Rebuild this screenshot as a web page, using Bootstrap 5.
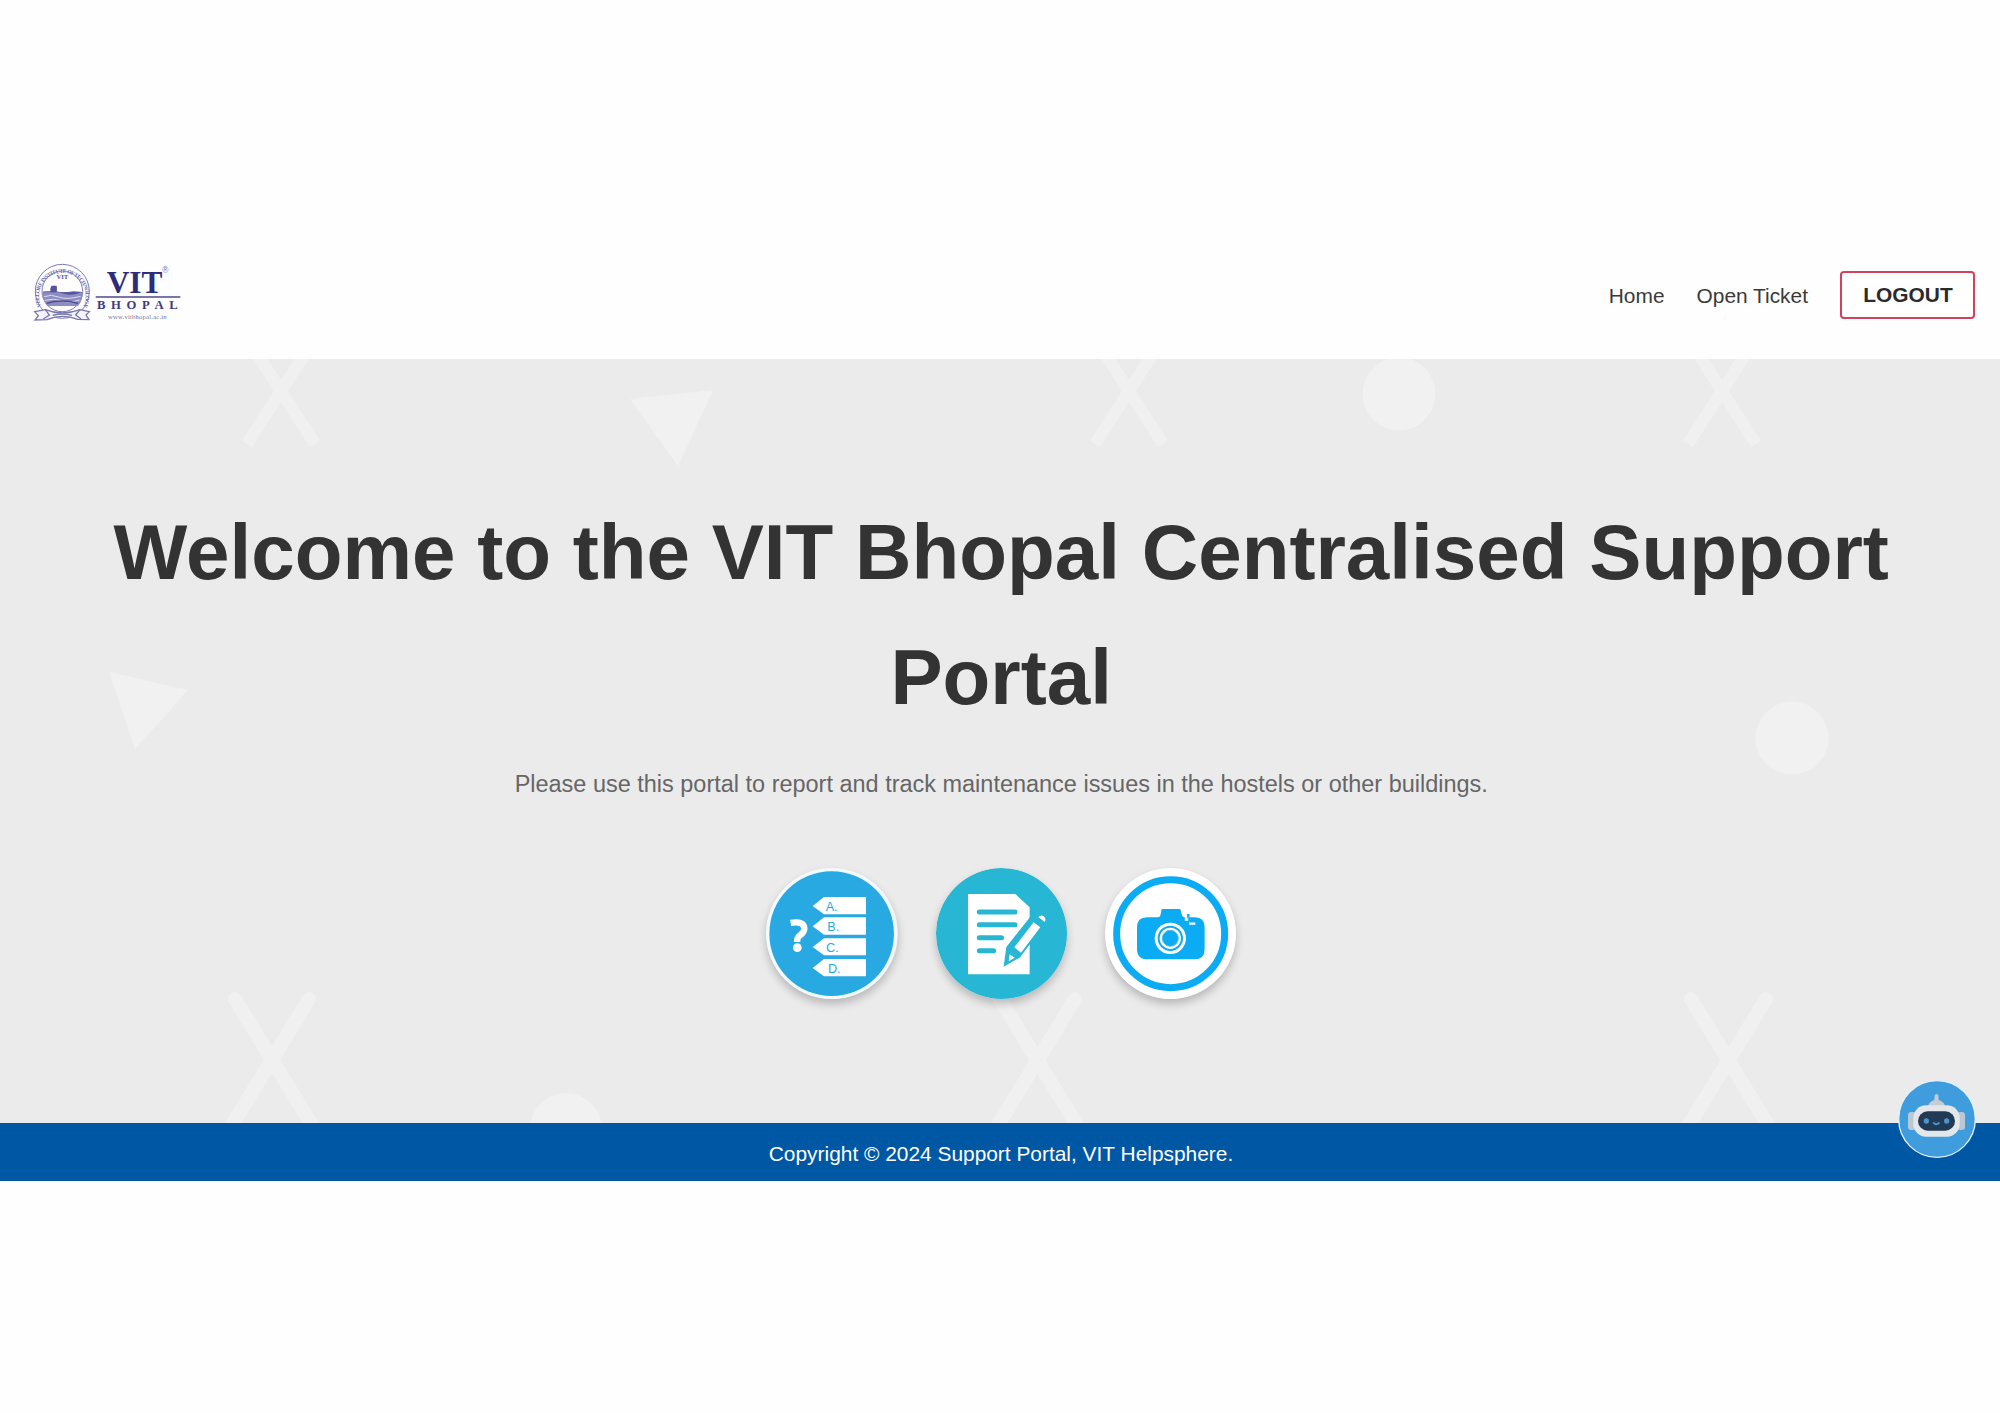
<!DOCTYPE html>
<html lang="en">
<head>
<meta charset="utf-8">
<meta name="viewport" content="width=device-width, initial-scale=1">
<title>VIT Bhopal Centralised Support Portal</title>
<link rel="stylesheet" href="https://cdn.jsdelivr.net/npm/bootstrap@5.3.0/dist/css/bootstrap.min.css">
<style>
body{font-family:"Liberation Sans",Arial,sans-serif;font-size:20.9px;line-height:1.6;color:#333;background:#fefefe;padding-top:222px;overflow-x:hidden}
.site-nav{height:137px;padding:0 25px 0 20px}
.site-nav .nav-link{color:#3a3a3a;padding:0;line-height:33px}
.nav-items{gap:32px;padding-top:9px}
.site-logo{width:180px;height:80px;display:block}
.btn-logout{border:2px solid #d5405c;border-radius:4px;color:#2b2b2b;font-weight:700;font-size:20.9px;line-height:32px;padding:6px 21px 6px 22px;width:135px;height:48px;background:#fff}
.hero{height:764px;background:#ebebeb;padding:130.5px 0 0 2.5px}
.hero-shapes{position:absolute;inset:0;width:100%;height:100%}
.hero h1{font-size:78.2px;line-height:125px;font-weight:700;color:#333;margin:0;width:1860px}
.hero-text{font-size:23.47px;line-height:37.6px;color:#666;margin:26px 0 65px}
.tool-list{gap:38px}
.tool-icon{width:131.3px;height:131.3px;border-radius:50%;box-shadow:0 5px 9px rgba(0,0,0,.22);overflow:hidden}
.tool-icon svg,.chat-bot svg{display:block;width:100%;height:100%}
.site-footer{height:58px;background:#0057a4;color:#fff;line-height:34px;padding:3px 0 0 2px}
.chat-bot{position:absolute;right:24px;bottom:23px;width:78px;height:78px}
</style>
</head>
<body>
<nav class="site-nav d-flex align-items-center justify-content-between">
  <a href="#" aria-label="VIT Bhopal">
    <svg class="site-logo" viewBox="0 0 540 240">
      <defs><path id="ring" d="M64 166A70 70 0 1 1 190 166"/></defs>
      <g fill="none" stroke="#7d7bb4">
        <circle cx="127" cy="121" r="81" stroke-width="3"/>
        <circle cx="127" cy="121" r="61" stroke-width="3"/>
      </g>
      <text font-family="Liberation Serif,serif" font-size="17" font-weight="700" fill="#6f6da8"><textPath href="#ring" textLength="285">VELLORE INSTITUTE OF TECHNOLOGY</textPath></text>
      <text x="127" y="83" text-anchor="middle" font-family="Liberation Serif,serif" font-weight="700" font-size="20" fill="#55539a">VIT</text>
      <path d="M67 121h26v-14h18v14l20 4 30-5 27 3q0 27-14 42H82Q67 148 67 121z" fill="#8c8dc0"/>
      <path d="M91 124v-12l4-8h15v20zM68 124q30-7 58 3t60-4" fill="#56549b"/>
      <path d="M72 137q22-8 44 1t66-2M74 148q28-7 50 1t55-2" fill="none" stroke="#deddf0" stroke-width="3"/>
      <path d="M80 157q47-14 94 0" fill="none" stroke="#4d4b94" stroke-width="4"/>
      <path d="M44 182l32-6q50 20 104 0l28 6-10 10 9 14-34-1q-46-18-92 1l-36 1 10-13z" fill="#f4f3fa" stroke="#7876ad" stroke-width="4"/>
      <path d="M76 176l12 16-18 12M180 176l-13 16 16 12M98 193q29-8 58 0" fill="none" stroke="#7876ad" stroke-width="4"/>
      <text x="260" y="126" textLength="167" lengthAdjust="spacingAndGlyphs" font-family="Liberation Serif,serif" font-weight="700" font-size="96" fill="#2c2c78">VIT</text>
      <text x="427" y="67" font-family="Liberation Sans,sans-serif" font-size="25" fill="#77759f">®</text>
      <path d="M227 138h254" stroke="#4a4a93" stroke-width="4"/>
      <text x="231" y="174" textLength="242" font-family="Liberation Serif,serif" font-weight="700" font-size="38" fill="#3b3a80">BHOPAL</text>
      <text x="264" y="204" textLength="176" font-family="Liberation Serif,serif" font-size="20" fill="#77759f">www.vitbhopal.ac.in</text>
    </svg>
  </a>
  <div class="nav-items d-flex align-items-center">
    <a class="nav-link" href="#">Home</a>
    <a class="nav-link" href="#">Open Ticket</a>
    <button class="btn-logout d-flex justify-content-center" type="button">LOGOUT</button>
  </div>
</nav>

<main class="hero position-relative overflow-hidden">
  <svg class="hero-shapes" viewBox="0 358 2000 764" fill="#f1f1f1" aria-hidden="true">
    <g fill="none" stroke="#f0f0f0" stroke-width="12">
      <path d="M256 351l59 92M306 351l-59 92"/>
      <path d="M1104 351l59 92M1154 351l-59 92"/>
      <path d="M1697 351l59 92M1747 351l-59 92"/>
    </g>
    <g fill="none" stroke="#f0f0f0" stroke-width="14" stroke-linecap="round">
      <path d="M235 998l80 131M309 998l-80 131"/>
      <path d="M1000 998l80 131M1075 998l-80 131"/>
      <path d="M1691 998l80 131M1766 998l-80 131"/>
    </g>
    <circle cx="1399" cy="393" r="36.5"/><circle cx="1792" cy="737" r="36.5"/><circle cx="566" cy="1128" r="36"/>
    <path d="M630 398l83-9-35 76zM109 671l79 18-53 59z"/>
  </svg>
  <div class="position-relative d-flex flex-column align-items-center text-center">
    <h1>Welcome to the VIT Bhopal Centralised Support Portal</h1>
    <p class="hero-text">Please use this portal to report and track maintenance issues in the hostels or other buildings.</p>
    <div class="tool-list d-flex">
      <a class="tool-icon" href="#" aria-label="Questions">
        <svg viewBox="48 50 394 394">
          <circle cx="245" cy="247" r="197" fill="#f3fafe"/><circle cx="245" cy="247" r="187" fill="#29a9e1"/>
          <g fill="#fff"><path d="M188 164l34-27h126v52H222zM188 225l34-27h126v52H222zM188 287l34-26h126v51H222zM188 350l34-27h126v52H222z"/>
          <circle cx="142" cy="289" r="13"/></g>
          <path d="M122 215q41-7 41 17 0 10-12 19-10 7-10 21" fill="none" stroke="#fff" stroke-width="19"/>
          <g font-family="Liberation Sans,sans-serif" font-size="38" fill="#29a9e1"><text x="227" y="178">A.</text><text x="232" y="240">B.</text><text x="228" y="301">C.</text><text x="234" y="364">D.</text></g>
        </svg>
      </a>
      <a class="tool-icon" href="#" aria-label="Report">
        <svg viewBox="558 50 394 394">
          <circle cx="755" cy="247" r="197" fill="#27b7d5"/>
          <path d="M654 128h142l43 40v201H654z" fill="#fff"/>
          <path d="M688 182h107M688 220h107M688 259h67M688 298h43" stroke="#27b7d5" stroke-width="15" stroke-linecap="round"/>
          <path d="M769 287l79-100 40 29-79 103-48 27z" fill="#27b7d5"/>
          <path d="M793 288l58-75 20 15-58 76z" fill="#fff"/>
          <path d="M865 197q11-10 19 1 5 7 0 14z" fill="#fff"/>
          <path d="M779 309l15 10-18 11z" fill="#fff"/>
        </svg>
      </a>
      <a class="tool-icon" href="#" aria-label="Photo">
        <svg viewBox="1064 50 394 394">
          <circle cx="1261" cy="247" r="197" fill="#fff"/><circle cx="1261" cy="247" r="162" fill="none" stroke="#0bacf3" stroke-width="21"/>
          <path d="M1190 198h32q8 0 9-10l3-15h56l4 15q2 10 10 10h30q29 0 29 30v65q0 31-30 31h-141q-32 0-32-31v-65q0-30 30-30z" fill="#0bacf3"/>
          <path d="M1314 188v10" stroke="#0bacf3" stroke-width="7"/>
          <path d="M1307 198v7h7M1316 217h19" fill="none" stroke="#fff" stroke-width="7"/>
          <circle cx="1260" cy="261" r="47" fill="#fff"/><circle cx="1260" cy="261" r="35" fill="none" stroke="#0bacf3" stroke-width="6"/><circle cx="1260" cy="261" r="24" fill="#0bacf3" stroke="#55b9e6" stroke-width="3"/>
        </svg>
      </a>
    </div>
  </div>
</main>

<footer class="site-footer position-relative text-center d-flex justify-content-center align-items-center">
  <span>Copyright © 2024 Support Portal, VIT Helpsphere.</span>
  <a class="chat-bot" href="#" aria-label="Chat">
    <svg viewBox="114 57 234 234">
      <circle cx="231" cy="174" r="115" fill="#409ddd" stroke="#e3f1fb" stroke-width="4"/>
      <rect x="144" y="153" width="24" height="54" rx="9" fill="#b9c8d2"/><rect x="291" y="153" width="24" height="54" rx="9" fill="#b9c8d2"/>
      <path d="M204 136q4-15 19-19l1-14q5-8 11 0l1 14q15 4 20 19z" fill="#c3cdd4"/>
      <rect x="160" y="133" width="139" height="94" rx="38" fill="#e4e7ea"/>
      <rect x="174" y="151" width="111" height="58" rx="29" fill="#213b56"/>
      <circle cx="199" cy="180" r="8" fill="#4d94c8"/><circle cx="260" cy="180" r="8" fill="#4d94c8"/>
      <path d="M220 184q9 12 18 0" fill="none" stroke="#4d94c8" stroke-width="6"/>
    </svg>
  </a>
</footer>
<script src="https://cdn.jsdelivr.net/npm/bootstrap@5.3.0/dist/js/bootstrap.bundle.min.js"></script>
</body>
</html>
